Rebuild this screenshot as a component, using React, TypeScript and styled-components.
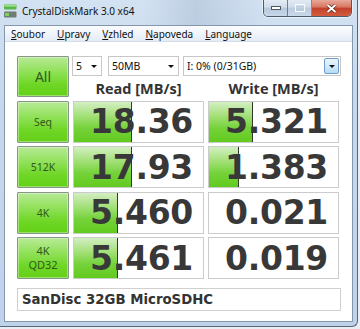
import styled, { createGlobalStyle } from "styled-components";

const GlobalStyle = createGlobalStyle`
    html, body {
        margin: 0;
        padding: 0;
        background: #e9eef4;
        overflow: hidden;
    }
    * {
        box-sizing: border-box;
    }
`;

const rows = [
    { label: ["Seq"], read: "18.36", readBar: 45, write: "5.321", writeBar: 34 },
    { label: ["512K"], read: "17.93", readBar: 45, write: "1.383", writeBar: 23 },
    { label: ["4K"], read: "5.460", readBar: 34, write: "0.021", writeBar: 0 },
    { label: ["4K", "QD32"], read: "5.461", readBar: 34, write: "0.019", writeBar: 0 },
];

const menus = [
    ["S", "oubor"],
    ["U", "pravy"],
    ["V", "zhled"],
    ["N", "apoveda"],
    ["L", "anguage"],
];

export default function App() {
    return (
        <>
            <GlobalStyle />
            <Window>
                <TitleBar>
                    <AppIcon width="13" height="14" viewBox="0 0 13 14">
                        <rect x="0" y="0.5" width="12.5" height="5" rx="1" fill="#58b94a" />
                        <rect x="0.5" y="1" width="11.5" height="1.6" fill="#9fe08c" />
                        <rect x="0" y="7.5" width="12.5" height="6" rx="1" fill="#6f7d72" />
                        <rect x="1" y="9" width="4" height="3" fill="#7fd05e" />
                    </AppIcon>
                    <Title>CrystalDiskMark 3.0 x64</Title>
                    <Controls>
                        <CtrlButton>
                            <svg width="10" height="4" viewBox="0 0 10 4">
                                <rect x="0.5" y="0.5" width="9" height="3" fill="#fff" stroke="#4a5868" />
                            </svg>
                        </CtrlButton>
                        <CtrlButton $faded>
                            <svg width="10" height="8" viewBox="0 0 10 8">
                                <rect x="0.5" y="0.5" width="9" height="7" fill="none" stroke="#fff" strokeWidth="1" />
                                <rect x="2" y="2.5" width="6" height="4" fill="none" stroke="#b8c6d6" />
                            </svg>
                        </CtrlButton>
                        <CloseButton>
                            <svg width="11" height="9" viewBox="0 0 11 9">
                                <path d="M1.5 1 L9.5 8 M9.5 1 L1.5 8" stroke="#5a1a10" strokeWidth="3.2" />
                                <path d="M1.5 1 L9.5 8 M9.5 1 L1.5 8" stroke="#fff" strokeWidth="2" />
                            </svg>
                        </CloseButton>
                    </Controls>
                </TitleBar>
                <Client>
                    <MenuBar>
                        {menus.map(([k, rest]) => (
                            <MenuItem key={k}>
                                <u>{k}</u>
                                {rest}
                            </MenuItem>
                        ))}
                    </MenuBar>
                    <Body>
                        <Grid>
                            <AllButton>All</AllButton>
                            <Combos>
                                <Combo $w={30}>
                                    <span>5</span>
                                    <Arrow />
                                </Combo>
                                <Combo $w={71}>
                                    <span>50MB</span>
                                    <Arrow />
                                </Combo>
                                <Combo $w={158}>
                                    <span>I: 0% (0/31GB)</span>
                                    <DropButton>
                                        <Arrow />
                                    </DropButton>
                                </Combo>
                            </Combos>
                            <Header>Read [MB/s]</Header>
                            <Header>Write [MB/s]</Header>
                            {rows.map((r) => (
                                <Row key={r.label.join()}>
                                    <TestButton $small={r.label.length > 1}>
                                        {r.label.map((l) => (
                                            <span key={l}>{l}</span>
                                        ))}
                                    </TestButton>
                                    <ValueCell>
                                        {r.readBar > 0 && <Bar style={{ width: `${r.readBar}%` }} />}
                                        <Value>{r.read}</Value>
                                    </ValueCell>
                                    <ValueCell>
                                        {r.writeBar > 0 && <Bar style={{ width: `${r.writeBar}%` }} />}
                                        <Value>{r.write}</Value>
                                    </ValueCell>
                                </Row>
                            ))}
                        </Grid>
                        <DriveName>SanDisc 32GB MicroSDHC</DriveName>
                    </Body>
                </Client>
            </Window>
        </>
    );
}

const Window = styled.div`
    width: 358px;
    height: 327px;
    display: flex;
    flex-direction: column;
    padding: 0 4px 4px 4px;
    background: linear-gradient(to bottom, #d3e2f2 0%, #c5d8ed 30%, #bed3ea 100%);
    border-right: 1px solid #56677c;
    border-bottom: 1px solid #56677c;
    border-bottom-right-radius: 6px;
`;

const TitleBar = styled.div`
    height: 25px;
    display: flex;
    align-items: flex-start;
    background: linear-gradient(to right, transparent 40%, rgba(150, 170, 195, 0.35) 55%, transparent 75%);
`;

const AppIcon = styled.svg`
    margin: 4px 0 0 0;
    flex-shrink: 0;
`;

const Title = styled.div`
    margin: 4px 0 0 5px;
    font-family: "Noto Sans", "Open Sans", sans-serif;
    font-size: 10px;
    color: #111;
`;

const Controls = styled.div`
    margin-left: auto;
    margin-right: 1px;
    display: flex;
    height: 17px;
    border: 1px solid #4c5b6d;
    border-top: none;
    border-radius: 0 0 5px 5px;
    overflow: hidden;
    box-shadow: 0 0 0 1px rgba(255, 255, 255, 0.5);
`;

const CtrlButton = styled.div<{ $faded?: boolean }>`
    width: 24px;
    display: flex;
    align-items: center;
    justify-content: center;
    border-right: 1px solid #6f7f92;
    background: linear-gradient(to bottom, #e4ebf4 0%, #d0dceb 45%, #b7c8dc 50%, #c9d8e9 100%);
    opacity: ${(p) => (p.$faded ? 0.85 : 1)};
`;

const CloseButton = styled.div`
    width: 39px;
    display: flex;
    align-items: center;
    justify-content: center;
    background: linear-gradient(to bottom, #e9a99b 0%, #d7765f 45%, #c2412a 50%, #d35d3f 100%);
`;

const Client = styled.div`
    flex: 1;
    display: flex;
    flex-direction: column;
    border: 1px solid #8597ad;
    background: #fff;
`;

const MenuBar = styled.div`
    height: 16px;
    display: flex;
    align-items: center;
    padding-left: 0;
    background: linear-gradient(to bottom, #fbfcfe 0%, #eef3fa 60%, #e3ebf5 100%);
    border-bottom: 1px solid #d5dde8;
`;

const MenuItem = styled.span`
    font-family: "Noto Sans", "Open Sans", sans-serif;
    font-size: 10px;
    color: #111;
    padding: 0 6px;
    u {
        text-decoration-thickness: 1px;
        text-underline-offset: 1px;
    }
`;

const Body = styled.div`
    flex: 1;
    padding: 14px 0 0 12px;
    display: flex;
    flex-direction: column;
`;

const Grid = styled.div`
    display: grid;
    grid-template-columns: 52px 131px 131px;
    grid-template-rows: 20px 17.5px;
    grid-auto-rows: 42px;
    column-gap: 4px;
    row-gap: 3.5px;
`;

const Row = styled.div`
    display: contents;
`;

const greenButton = `
    border: 1px solid #8a958a;
    border-radius: 1px;
    background: linear-gradient(to bottom, #b7ea96 0%, #8ee055 40%, #6fd626 70%, #63d016 100%);
    box-shadow: inset 0 0 0 1px rgba(255, 255, 255, 0.35);
    color: #2f5b1a;
    font-family: "Noto Sans", "Open Sans", sans-serif;
    display: flex;
    flex-direction: column;
    align-items: center;
    justify-content: center;
`;

const AllButton = styled.div`
    ${greenButton}
    grid-row: 1 / 3;
    font-size: 14px;
`;

const TestButton = styled.div<{ $small?: boolean }>`
    ${greenButton}
    font-size: ${(p) => (p.$small ? "11px" : "10.5px")};
    line-height: ${(p) => (p.$small ? "14px" : "normal")};
`;

const Combos = styled.div`
    grid-column: 2 / 4;
    display: flex;
    margin-left: -1px;
    gap: 6px;
    & > :last-child {
        margin-left: -2px;
    }
`;

const Combo = styled.div<{ $w: number }>`
    width: ${(p) => p.$w}px;
    flex-shrink: 0;
    height: 20px;
    display: flex;
    align-items: center;
    justify-content: space-between;
    padding: 0 1px 0 3px;
    border: 1px solid #c7c7c7;
    background: #fff;
    font-family: "Noto Sans", "Open Sans", sans-serif;
    font-size: 10.5px;
    color: #111;
    & > :last-child:not(span) {
        margin-right: 3px;
    }
`;

const Arrow = styled.i`
    display: block;
    width: 0;
    height: 0;
    border-left: 3px solid transparent;
    border-right: 3px solid transparent;
    border-top: 3px solid #111;
`;

const DropButton = styled.div`
    width: 15px;
    height: 16px;
    display: flex;
    align-items: center;
    justify-content: center;
    border: 1px solid #6f9cc6;
    border-radius: 2px;
    background: linear-gradient(to bottom, #eaf5fd 0%, #d3eafa 50%, #b4dcf5 100%);
    margin-right: 0 !important;
`;

const Header = styled.div`
    text-align: center;
    font-family: "Open Sans", "Noto Sans", sans-serif;
    font-weight: 700;
    font-size: 14.5px;
    line-height: 17px;
    color: #333;
`;

const ValueCell = styled.div`
    position: relative;
    border: 1px solid #cbcbcb;
    background: #fff;
    display: flex;
    align-items: center;
    justify-content: flex-end;
    padding-right: 10px;
    overflow: hidden;
`;

const Bar = styled.div`
    position: absolute;
    left: 0;
    top: 0;
    bottom: 0;
    background: linear-gradient(to bottom, #d3efc2 0%, #a3e078 35%, #75d23a 65%, #62cb1e 100%);
    border-right: 1px solid #2f3a2a;
`;

const Value = styled.span`
    position: relative;
    font-family: "DejaVu Sans", Verdana, sans-serif;
    font-weight: 700;
    font-size: 33px;
    line-height: 1;
    color: #383838;
    letter-spacing: -0.3px;
`;

const DriveName = styled.div`
    margin-top: 8.5px;
    width: 324px;
    height: 23px;
    border: 1px solid #d0d0d0;
    display: flex;
    align-items: center;
    padding-left: 4px;
    font-family: "DejaVu Sans", Verdana, sans-serif;
    font-weight: 700;
    font-size: 13.3px;
    color: #333;
`;
